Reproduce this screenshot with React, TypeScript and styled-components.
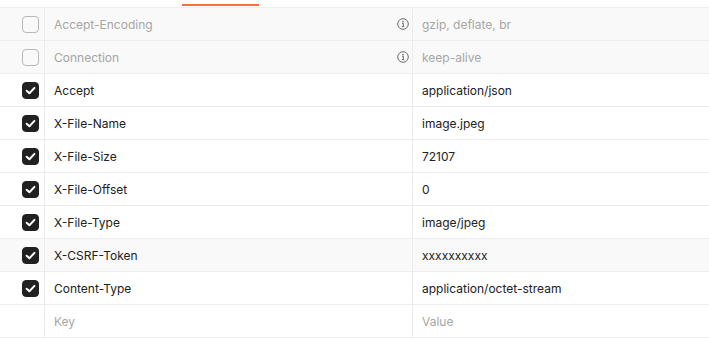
import React from 'react'
import styled, { createGlobalStyle } from 'styled-components'

const GlobalStyle = createGlobalStyle`
    body {
        margin: 0;
        background: #ffffff;
        font-family: Inter, "Noto Sans", sans-serif;
    }
`

const TabStrip = styled.div`
    height: 3px;
    padding: 4px 0 0 182px;
    border-bottom: 1px solid #ededed;
`

const ActiveTab = styled.div`
    width: 77px;
    height: 2px;
    background: #ff6c37;
`

const Row = styled.div<{ $shaded?: boolean }>`
    display: grid;
    grid-template-columns: 45px 368px 1fr;
    height: 33px;
    box-sizing: border-box;
    border-bottom: 1px solid #ededed;
    background: ${p => (p.$shaded ? '#f9f9f9' : '#ffffff')};
`

const Cell = styled.div<{ $muted?: boolean }>`
    display: flex;
    align-items: center;
    padding: 0 0 0 9px;
    border-right: 1px solid #ededed;
    font-size: 12px;
    color: ${p => (p.$muted ? '#a6a6a6' : '#212121')};
    white-space: nowrap;
    &:last-child {
        border-right: none;
    }
`

const CheckCell = styled.div`
    display: flex;
    align-items: center;
    justify-content: flex-end;
    padding-right: 5px;
    border-right: 1px solid #ededed;
`

const Box = styled.div<{ $checked?: boolean }>`
    width: 17px;
    height: 17px;
    box-sizing: border-box;
    border-radius: 4px;
    border: 1px solid ${p => (p.$checked ? '#212121' : '#b8b8b8')};
    background: ${p => (p.$checked ? '#212121' : 'transparent')};
    display: flex;
    align-items: center;
    justify-content: center;
`

const KeyText = styled.span`
    flex: 1;
`

const InfoIcon = styled.svg`
    width: 12px;
    height: 12px;
    margin-right: 3px;
    flex-shrink: 0;
`

type Header = {
    key: string
    value: string
    checked?: boolean
    disabled?: boolean
    hovered?: boolean
    info?: boolean
}

const headers: Header[] = [
    { key: 'Accept-Encoding', value: 'gzip, deflate, br', disabled: true, info: true },
    { key: 'Connection', value: 'keep-alive', disabled: true, info: true },
    { key: 'Accept', value: 'application/json', checked: true },
    { key: 'X-File-Name', value: 'image.jpeg', checked: true },
    { key: 'X-File-Size', value: '72107', checked: true },
    { key: 'X-File-Offset', value: '0', checked: true },
    { key: 'X-File-Type', value: 'image/jpeg', checked: true },
    { key: 'X-CSRF-Token', value: 'xxxxxxxxxx', checked: true, hovered: true },
    { key: 'Content-Type', value: 'application/octet-stream', checked: true },
]

function Check() {
    return (
        <svg width="11" height="11" viewBox="0 0 10 10">
            <polyline points="1.5,5.2 4,7.5 8.6,2.6" fill="none" stroke="#ffffff" strokeWidth="1.8" strokeLinecap="round" strokeLinejoin="round" />
        </svg>
    )
}

function Info() {
    return (
        <InfoIcon viewBox="0 0 12 12">
            <circle cx="6" cy="6" r="5.3" fill="none" stroke="#6b6b6b" strokeWidth="1" />
            <circle cx="6" cy="3.6" r="0.8" fill="#6b6b6b" />
            <path d="M5 5.2h1.3v3.4M4.9 8.6h2.3" fill="none" stroke="#6b6b6b" strokeWidth="1" />
        </InfoIcon>
    )
}

export default function App() {
    return (
        <>
            <GlobalStyle />
            <TabStrip>
                <ActiveTab />
            </TabStrip>
            {headers.map(h => (
                <Row key={h.key} $shaded={h.disabled || h.hovered}>
                    <CheckCell>
                        <Box $checked={h.checked}>{h.checked && <Check />}</Box>
                    </CheckCell>
                    <Cell $muted={h.disabled}>
                        <KeyText>{h.key}</KeyText>
                        {h.info && <Info />}
                    </Cell>
                    <Cell $muted={h.disabled}>{h.value}</Cell>
                </Row>
            ))}
            <Row>
                <CheckCell />
                <Cell $muted>Key</Cell>
                <Cell $muted>Value</Cell>
            </Row>
        </>
    )
}
